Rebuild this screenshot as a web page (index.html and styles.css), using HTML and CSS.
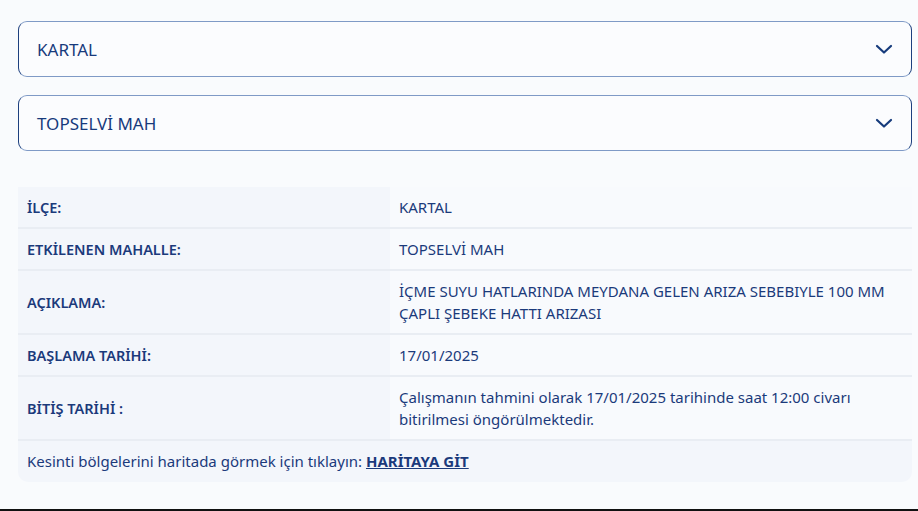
FILE: index.html
```html
<!DOCTYPE html>
<html lang="tr">
<head>
<meta charset="utf-8">
<title>Kesinti</title>
<link rel="stylesheet" href="styles.css">
</head>
<body>
<div class="page">
  <div class="select">
    <span>KARTAL</span>
    <svg class="chev" width="18" height="12" viewBox="0 0 18 12"><path d="M2 3 L9 9.5 L16 3" fill="none" stroke="#163b7c" stroke-width="2.2" stroke-linecap="round" stroke-linejoin="round"/></svg>
  </div>
  <div class="select">
    <span>TOPSELVİ MAH</span>
    <svg class="chev" width="18" height="12" viewBox="0 0 18 12"><path d="M2 3 L9 9.5 L16 3" fill="none" stroke="#163b7c" stroke-width="2.2" stroke-linecap="round" stroke-linejoin="round"/></svg>
  </div>
  <div class="info">
    <div class="row"><div class="label">İLÇE:</div><div class="value">KARTAL</div></div>
    <div class="row"><div class="label">ETKİLENEN MAHALLE:</div><div class="value">TOPSELVİ MAH</div></div>
    <div class="row"><div class="label">AÇIKLAMA:</div><div class="value">İÇME SUYU HATLARINDA MEYDANA GELEN ARIZA SEBEBIYLE 100 MM ÇAPLI ŞEBEKE HATTI ARIZASI</div></div>
    <div class="row"><div class="label">BAŞLAMA TARİHİ:</div><div class="value">17/01/2025</div></div>
    <div class="row"><div class="label">BİTİŞ TARİHİ :</div><div class="value">Çalışmanın tahmini olarak 17/01/2025 tarihinde saat 12:00 civarı bitirilmesi öngörülmektedir.</div></div>
    <div class="foot">Kesinti bölgelerini haritada görmek için tıklayın: <a href="#" class="maplink">HARİTAYA GİT</a></div>
  </div>
</div>
<div class="bottomline"></div>
</body>
</html>
```

FILE: styles.css
```css
html, body {
  margin: 0;
  padding: 0;
  background: #f9fbfd;
  height: 100%;
}
body {
  font-family: "Noto Sans", sans-serif;
  color: #1b3a7b;
  font-size: 15px;
  display: flex;
  flex-direction: column;
}
.page {
  flex: 1;
  padding: 21px 6px 0 18px;
  display: flex;
  flex-direction: column;
}
.select {
  height: 54px;
  border: 1px solid;
  border-color: #7f9ac6 #1d3f7e;
  border-radius: 9px;
  background: #fbfcfe;
  display: flex;
  align-items: center;
  justify-content: space-between;
  padding: 0 18px 0 18px;
  font-size: 17px;
  margin-bottom: 18px;
  color: #173a7c;
}
.chev { display: block; }
.info {
  margin-top: 18px;
  border-radius: 0 0 10px 10px;
  background: #f3f6fb;
  overflow: hidden;
}
.row {
  display: flex;
  border-bottom: 2px solid #e9edf3;
  line-height: 22px;
}
.label {
  width: 372px;
  flex: none;
  box-sizing: border-box;
  padding: 9px 9px;
  font-weight: 600;
  font-size: 14.5px;
  display: flex;
  align-items: center;
  background: #f3f6fb;
}
.value {
  flex: 1;
  padding: 9px 20px 9px 9px;
  background: #f8fafd;
}
.foot {
  padding: 9px;
  line-height: 23px;
}
.maplink {
  color: #1b3a7b;
  font-weight: 700;
  text-decoration: underline;
}
.bottomline {
  height: 2px;
  background: #111;
  margin-top: auto;
}
```
